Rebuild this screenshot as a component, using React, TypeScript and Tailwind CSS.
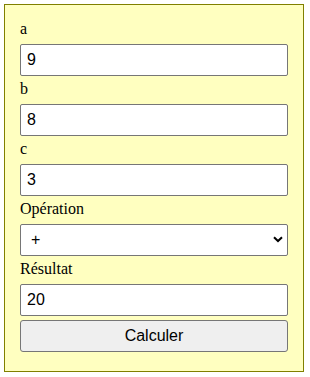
import React, { useState } from "react";

export default function App() {
  const [a, setA] = useState("9");
  const [b, setB] = useState("8");
  const [c, setC] = useState("3");
  const [op, setOp] = useState("+");
  const [res, setRes] = useState("20");

  const calc = () => {
    const x = parseFloat(a), y = parseFloat(b), z = parseFloat(c);
    let r = 0;
    if (op === "+") r = x + y + z;
    else if (op === "-") r = x - y - z;
    else if (op === "*") r = x * y * z;
    else r = x / y / z;
    setRes(String(r));
  };

  const label = "block text-[16px] leading-[18px] mb-[6px] text-black";
  const input =
    "block w-full h-[32px] mb-[4px] border border-[#767676] rounded-[2px] bg-white px-[6px] py-[6px] text-[16px] leading-[18px] text-black outline-none";

  return (
    <div className="p-[4px]" style={{ fontFamily: '"Liberation Serif", serif' }}>
      <div className="w-[300px] border border-[#808000] bg-[#ffffc0] p-[15px]">
        <label className={label}>a</label>
        <input className={input} style={{ fontFamily: '"Liberation Sans", Arial, sans-serif' }} value={a} onChange={(e) => setA(e.target.value)} />
        <label className={label}>b</label>
        <input className={input} style={{ fontFamily: '"Liberation Sans", Arial, sans-serif' }} value={b} onChange={(e) => setB(e.target.value)} />
        <label className={label}>c</label>
        <input className={input} style={{ fontFamily: '"Liberation Sans", Arial, sans-serif' }} value={c} onChange={(e) => setC(e.target.value)} />
        <label className={label}>Opération</label>
        <div className="relative mb-[4px]">
          <select
            className="block w-full h-[32px] appearance-none border border-[#767676] rounded-[2px] bg-white pl-[10px] pr-[24px] text-[16px] leading-[18px] text-black outline-none"
            style={{ fontFamily: '"Liberation Sans", Arial, sans-serif' }}
            value={op}
            onChange={(e) => setOp(e.target.value)}
          >
            <option value="+">+</option>
            <option value="-">-</option>
            <option value="*">*</option>
            <option value="/">/</option>
          </select>
          <svg className="pointer-events-none absolute right-[5px] top-[12px]" width="10" height="7" viewBox="0 0 10 7">
            <path d="M1 1.2 L5 5 L9 1.2" fill="none" stroke="#000" strokeWidth="2" />
          </svg>
        </div>
        <label className={label}>Résultat</label>
        <input className={input} style={{ fontFamily: '"Liberation Sans", Arial, sans-serif' }} value={res} readOnly />
        <button
          onClick={calc}
          className="block w-full h-[32px] mb-[4px] border border-[#767676] rounded-[3px] bg-[#efefef] text-[16px] leading-[18px] text-black"
          style={{ fontFamily: '"Liberation Sans", Arial, sans-serif' }}
        >
          Calculer
        </button>
      </div>
    </div>
  );
}
